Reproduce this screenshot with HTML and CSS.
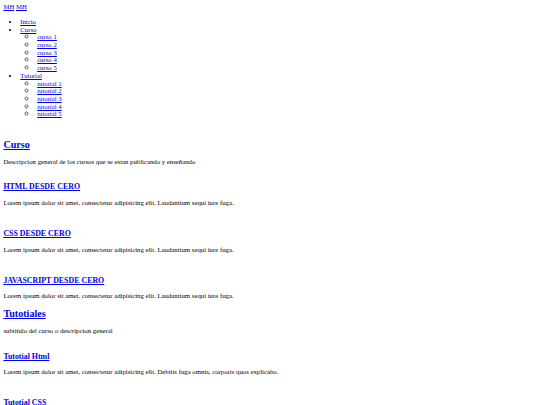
FILE: index.html
```html
<!DOCTYPE html>
<html lang="es">
<head>
<meta charset="utf-8">
<title>MH</title>
<link rel="stylesheet" href="styles.css">
</head>
<body>
<header class="site-header">
  <div class="brand"><a href="#">MH</a> <a href="#">MH</a></div>
  <nav class="menu">
    <ul class="menu-list">
      <li><a href="#">Inicio</a></li>
      <li><a href="#">Curso</a>
        <ul class="submenu">
          <li><a href="#">curso 1</a></li>
          <li><a href="#">curso 2</a></li>
          <li><a href="#">curso 3</a></li>
          <li><a href="#">curso 4</a></li>
          <li><a href="#">curso 5</a></li>
        </ul>
      </li>
      <li><a href="#">Tutorial</a>
        <ul class="submenu">
          <li><a href="#">tutorial 1</a></li>
          <li><a href="#">tutorial 2</a></li>
          <li><a href="#">tutorial 3</a></li>
          <li><a href="#">tutorial 4</a></li>
          <li><a href="#">tutorial 5</a></li>
        </ul>
      </li>
    </ul>
  </nav>
</header>
<main class="content">
  <section class="group">
    <h2 class="group-title"><a href="#">Curso</a></h2>
    <p class="group-desc">Descripcion general de los cursos que se estan publicando y enseñando</p>
    <article class="item">
      <h3 class="item-title"><a href="#">HTML DESDE CERO</a></h3>
      <p class="item-text">Lorem ipsum dolor sit amet, consectetur adipisicing elit. Laudantium sequi iure fuga.</p>
    </article>
    <article class="item">
      <h3 class="item-title"><a href="#">CSS DESDE CERO</a></h3>
      <p class="item-text">Lorem ipsum dolor sit amet, consectetur adipisicing elit. Laudantium sequi iure fuga.</p>
    </article>
    <article class="item">
      <h3 class="item-title"><a href="#">JAVASCRIPT DESDE CERO</a></h3>
      <p class="item-text">Lorem ipsum dolor sit amet, consectetur adipisicing elit. Laudantium sequi iure fuga.</p>
    </article>
  </section>
  <section class="group">
    <h2 class="group-title"><a href="#">Tutotiales</a></h2>
    <p class="group-desc">subtitulo del curso o descripcion general</p>
    <article class="item">
      <h3 class="item-title"><a href="#">Tutotial Html</a></h3>
      <p class="item-text">Lorem ipsum dolor sit amet, consectetur adipisicing elit. Debitis fuga omnis, corporis quos explicabo.</p>
    </article>
    <article class="item">
      <h3 class="item-title"><a href="#">Tutotial CSS</a></h3>
      <p class="item-text">Lorem ipsum dolor sit amet, consectetur adipisicing elit. Debitis fuga omnis, corporis quos explicabo.</p>
    </article>
    <article class="item">
      <h3 class="item-title"><a href="#">Tutotial JavaScript</a></h3>
      <p class="item-text">Lorem ipsum dolor sit amet, consectetur adipisicing elit. Debitis fuga omnis, corporis quos explicabo.</p>
    </article>
  </section>
</main>
</body>
</html>
```
FILE: styles.css
```css
body {
  margin: 3.375px;
  font-family: "Liberation Serif", "Times New Roman", serif;
  font-size: 6.75px;
  line-height: 7.76px;
  color: #000;
  background: #fff;
}

a {
  color: #0000ee;
  text-decoration: underline;
  text-decoration-thickness: 0.6px;
}

.brand {
  line-height: 7.76px;
}

.menu-list {
  margin: 6.75px 0 0;
  padding-left: 16.875px;
  list-style: disc;
  line-height: 7.7px;
}

.submenu {
  margin: 0;
  padding-left: 16.875px;
  list-style: circle;
}

.submenu > li::marker {
  font-size: 8.5px;
  color: #555;
}

.content {
  padding-top: 21.2px;
}

.group-title {
  font-size: 10.125px;
  line-height: 11.6px;
  font-weight: bold;
  margin: 8.3px 0 0;
}

.group:first-child .group-title {
  margin-top: 0;
}

.group-desc {
  margin: 7.3px 0 0;
  line-height: 7.76px;
}

.item-title {
  font-size: 7.9px;
  line-height: 9.1px;
  font-weight: bold;
  margin: 22.4px 0 0;
}

.group-desc + .item .item-title {
  margin-top: 16.6px;
}

.item-text {
  margin: 7.4px 0 0;
  line-height: 7.76px;
}
```
